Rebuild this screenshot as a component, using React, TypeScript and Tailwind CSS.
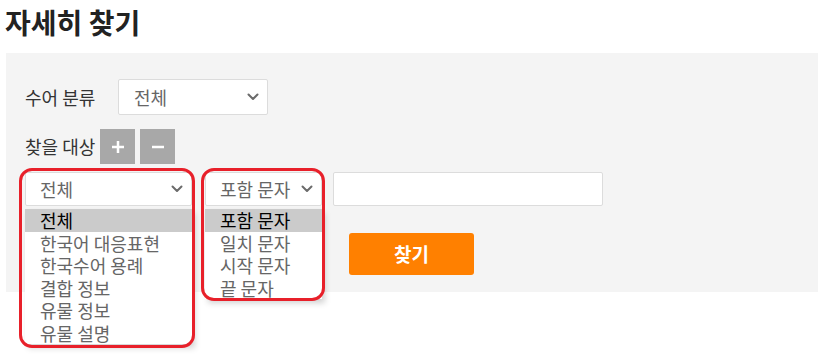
import React from 'react';

const Chevron = () => (
  <svg width="12" height="8" viewBox="0 0 12 8" fill="none" stroke="#6b6b6b" strokeWidth="2" strokeLinecap="round" strokeLinejoin="round">
    <polyline points="1.5 1.5 6 6 10.5 1.5" />
  </svg>
);

const FakeSelect: React.FC<{ value: string; className: string }> = ({ value, className }) => (
  <div className={`flex items-center justify-between bg-white border border-[#dcdcdc] rounded-[2px] text-[#666] ${className}`}>
    <span>{value}</span>
    <Chevron />
  </div>
);

const OptionList: React.FC<{ items: string[]; className: string }> = ({ items, className }) => (
  <div className={`absolute bg-white ${className}`}>
    {items.map((item, i) => (
      <div
        key={item}
        className={`h-[22.5px] leading-[22px] pl-[15px] text-[18px] whitespace-nowrap ${i === 0 ? 'bg-[#cbcbcb] text-black' : 'text-[#666]'}`}
      >
        {item}
      </div>
    ))}
  </div>
);

export default function App() {
  return (
    <div className="w-[830px] h-[358px] bg-white text-[#333] font-['Noto_Sans_CJK_KR','Noto_Sans',sans-serif] overflow-hidden">
      <h1 className="h-[53px] pl-[5px] pt-[2px] text-[28px] font-bold leading-[40px] text-[#222]">자세히 찾기</h1>

      <div className="ml-[6px] w-[812px] h-[239px] bg-[#f4f4f4] pl-[19px] pt-[26px]">
        <div className="flex items-center">
          <span className="w-[93px] text-[18px]">수어 분류</span>
          <FakeSelect value="전체" className="w-[150px] h-[36px] pl-[15px] pr-[8px] text-[18px]" />
        </div>

        <div className="flex items-center mt-[14px]">
          <span className="w-[75px] text-[18px]">찾을 대상</span>
          <div className="flex gap-[5px]">
            <div className="w-[35px] h-[35px] bg-[#a8a8a8] flex items-center justify-center">
              <svg width="16" height="16" viewBox="0 0 16 16"><path d="M8 2v12M2 8h12" stroke="#fff" strokeWidth="2.5" /></svg>
            </div>
            <div className="w-[35px] h-[35px] bg-[#a8a8a8] flex items-center justify-center">
              <svg width="14" height="16" viewBox="0 0 14 16"><path d="M1 8h12" stroke="#fff" strokeWidth="2.5" /></svg>
            </div>
          </div>
        </div>

        <div className="flex items-start mt-[8px]">
          <div className="relative">
            <FakeSelect value="전체" className="w-[167px] h-[34px] pl-[14px] pr-[8px] text-[18px]" />
            <OptionList
              items={['전체', '한국어 대응표현', '한국수어 용례', '결합 정보', '유물 정보', '유물 설명']}
              className="left-0 top-[37px] w-[167px] shadow-[3px_4px_6px_rgba(0,0,0,0.18)]"
            />
            <div className="absolute -left-[6px] -top-[4px] w-[176px] h-[180px] border-[3px] border-[#e8202a] rounded-[13px]" />
          </div>

          <div className="relative ml-[13px]">
            <FakeSelect value="포함 문자" className="w-[117px] h-[34px] pl-[14px] pr-[8px] text-[18px]" />
            <OptionList
              items={['포함 문자', '일치 문자', '시작 문자', '끝 문자']}
              className="left-0 top-[37px] w-[117px] shadow-[3px_4px_6px_rgba(0,0,0,0.18)]"
            />
            <div className="absolute -left-[4px] -top-[4px] w-[124px] h-[133px] border-[3px] border-[#e8202a] rounded-[13px]" />
          </div>

          <div className="ml-[11px]">
            <div className="w-[270px] h-[34px] bg-white border border-[#dcdcdc] rounded-[2px]" />
            <button className="mt-[27px] ml-[16px] w-[125px] h-[42px] bg-[#ff8000] rounded-[3px] text-white text-[19px] font-bold">찾기</button>
          </div>
        </div>
      </div>
    </div>
  );
}
